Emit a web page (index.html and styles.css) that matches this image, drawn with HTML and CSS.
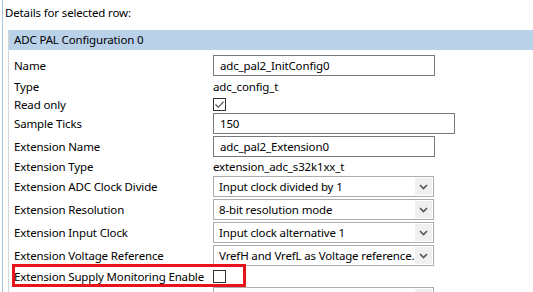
FILE: index.html
```html
<!DOCTYPE html>
<html lang="en">
<head>
    <meta charset="UTF-8">
    <title>Details for selected row</title>
    <link rel="stylesheet" href="styles.css">
</head>
<body>
    <div class="details">
        <div class="details-title">Details for selected row:</div>

        <div class="panel">
            <div class="panel-header">ADC PAL Configuration 0</div>

            <div class="rows">
                <div class="row">
                    <span class="label">Name</span>
                    <div class="text-input">adc_pal2_InitConfig0</div>
                </div>
                <div class="row row-type">
                    <span class="label">Type</span>
                    <span class="value">adc_config_t</span>
                </div>
                <div class="row row-readonly">
                    <span class="label">Read only</span>
                    <span class="checkbox">
                        <svg width="11" height="11" viewBox="0 0 11 11"><path d="M1.5 5.5 L4.3 8.3 L9.6 2.6" fill="none" stroke="#444" stroke-width="1.1"/></svg>
                    </span>
                </div>
                <div class="row">
                    <span class="label">Sample Ticks</span>
                    <div class="text-input wide">150</div>
                </div>
                <div class="row">
                    <span class="label">Extension Name</span>
                    <div class="text-input">adc_pal2_Extension0</div>
                </div>
                <div class="row row-exttype">
                    <span class="label">Extension Type</span>
                    <span class="value">extension_adc_s32k1xx_t</span>
                </div>
                <div class="row">
                    <span class="label">Extension ADC Clock Divide</span>
                    <div class="select"><span class="select-text">Input clock divided by 1</span><span class="select-btn"><svg width="9" height="6" viewBox="0 0 9 6"><path d="M1 1 L4.5 4.5 L8 1" fill="none" stroke="#555" stroke-width="1.6"/></svg></span></div>
                </div>
                <div class="row">
                    <span class="label">Extension Resolution</span>
                    <div class="select"><span class="select-text">8-bit resolution mode</span><span class="select-btn"><svg width="9" height="6" viewBox="0 0 9 6"><path d="M1 1 L4.5 4.5 L8 1" fill="none" stroke="#555" stroke-width="1.6"/></svg></span></div>
                </div>
                <div class="row">
                    <span class="label">Extension Input Clock</span>
                    <div class="select"><span class="select-text">Input clock alternative 1</span><span class="select-btn"><svg width="9" height="6" viewBox="0 0 9 6"><path d="M1 1 L4.5 4.5 L8 1" fill="none" stroke="#555" stroke-width="1.6"/></svg></span></div>
                </div>
                <div class="row">
                    <span class="label">Extension Voltage Reference</span>
                    <div class="select"><span class="select-text">VrefH and VrefL as Voltage reference.</span><span class="select-btn"><svg width="9" height="6" viewBox="0 0 9 6"><path d="M1 1 L4.5 4.5 L8 1" fill="none" stroke="#555" stroke-width="1.6"/></svg></span></div>
                </div>
                <div class="row row-supply">
                    <span class="label">Extension Supply Monitoring Enable</span>
                    <span class="checkbox"></span>
                    <span class="highlight"></span>
                </div>
                <div class="row row-last">
                    <span class="label"></span>
                    <div class="select"><span class="select-text"></span><span class="select-btn"></span></div>
                </div>
            </div>
        </div>
    </div>
</body>
</html>
```

FILE: styles.css
```css
html, body {
    margin: 0;
    height: 100%;
    overflow: hidden;
    background: #fff;
}
body {
    font-family: 'Noto Sans', 'Open Sans', sans-serif;
    font-size: 11.5px;
    letter-spacing: -0.15px;
    color: #000;
}
.details {
    height: 100%;
    margin-left: 2px;
    border-left: 1px solid #a9c4e2;
    padding-left: 2px;
}
.details-title {
    height: 30px;
    line-height: 26px;
}
.panel {
    margin-left: 3px;
    border-left: 1px solid #d6d6d6;
    height: 100%;
}
.panel-header {
    height: 20px;
    line-height: 20px;
    background-color: #bad1ea;
    padding-left: 5px;
}
.rows {
    padding-top: 5px;
    display: flex;
    flex-direction: column;
}
.row {
    position: relative;
    display: flex;
    align-items: center;
    height: 21px;
    margin-bottom: 2px;
}
.row-type { height: 17px; }
.row-readonly { height: 14px; }
.row-exttype { height: 15px; }
.row-supply { height: 17px; }
.label {
    width: 199px;
    padding-left: 5px;
    flex: none;
    white-space: nowrap;
}
.text-input {
    box-sizing: border-box;
    width: 222px;
    height: 21px;
    line-height: 19px;
    border: 1px solid #7a7a7a;
    padding-left: 6px;
}
.text-input.wide {
    width: 242px;
}
.checkbox {
    box-sizing: border-box;
    width: 13px;
    height: 13px;
    border: 1px solid #333;
    display: flex;
    align-items: center;
    justify-content: center;
}
.select {
    box-sizing: border-box;
    width: 221px;
    height: 21px;
    border: 1px solid #adadad;
    display: flex;
    align-items: stretch;
}
.select-text {
    flex: 1;
    padding-left: 5px;
    line-height: 19px;
    white-space: nowrap;
    overflow: hidden;
}
.select-btn {
    width: 17px;
    margin: 1px 1px 1px 0;
    background-color: #f0f0f0;
    display: flex;
    align-items: center;
    justify-content: center;
}
.highlight {
    position: absolute;
    left: 3px;
    top: -4px;
    width: 234px;
    height: 23px;
    border: 3px solid #e8141b;
    box-sizing: border-box;
}
```
